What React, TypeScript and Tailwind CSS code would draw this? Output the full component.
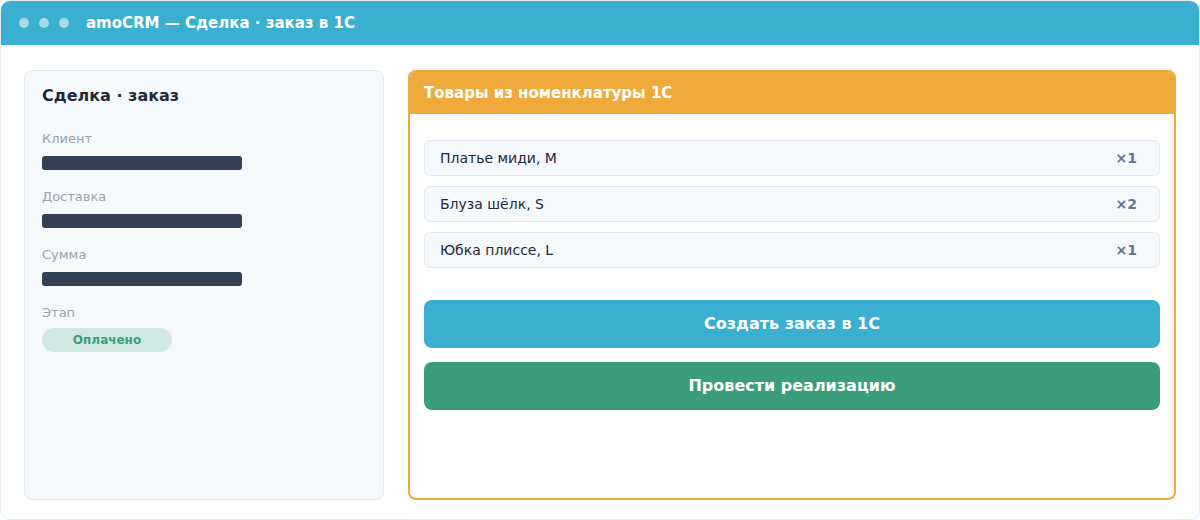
import React from "react";

const fields = ["Клиент", "Доставка", "Сумма"];

const items = [
    { name: "Платье миди, M", qty: "×1" },
    { name: "Блуза шёлк, S", qty: "×2" },
    { name: "Юбка плиссе, L", qty: "×1" },
];

const App: React.FC = () => {
    return (
        <div className="w-[1200px] h-[520px] bg-white font-['DejaVu_Sans',sans-serif]">
            <div className="h-full flex flex-col rounded-[10px] border border-[#e2e8f0] overflow-hidden">
                {/* title bar */}
                <div className="h-[44px] shrink-0 bg-[#3bafcf] flex items-center pl-[18px]">
                    <div className="flex gap-[10px]">
                        <span className="w-[10px] h-[10px] rounded-full bg-white/55" />
                        <span className="w-[10px] h-[10px] rounded-full bg-white/55" />
                        <span className="w-[10px] h-[10px] rounded-full bg-white/55" />
                    </div>
                    <div className="ml-[17px] text-white font-bold text-[15px]">amoCRM — Сделка · заказ в 1С</div>
                </div>

                <div className="flex-1 flex gap-[24px] px-[23px] pt-[25px] pb-[19px]">
                    {/* deal card */}
                    <div className="w-[360px] shrink-0 bg-[#f5f9fc] border border-[#e2e8f0] rounded-[8px] px-[17px] pt-[15px]">
                        <div className="text-[16px] leading-[20px] font-bold text-[#1f2937]">Сделка · заказ</div>
                        <div className="mt-[25px] flex flex-col gap-[19px]">
                            {fields.map((f) => (
                                <div key={f}>
                                    <div className="text-[13px] leading-[16px] text-[#9ca3af]">{f}</div>
                                    <div className="mt-[9px] w-[200px] h-[14px] rounded-[3px] bg-[#334155]" />
                                </div>
                            ))}
                            <div>
                                <div className="text-[13px] leading-[16px] text-[#9ca3af]">Этап</div>
                                <div className="mt-[7px] w-[130px] h-[24px] rounded-full bg-[#d1e7e2] flex items-center justify-center text-[12px] font-bold text-[#3b9d7c]">
                                    Оплачено
                                </div>
                            </div>
                        </div>
                    </div>

                    {/* goods card */}
                    <div className="flex-1 border-2 border-[#f0aa3c] rounded-[8px] overflow-hidden flex flex-col">
                        <div className="h-[42px] shrink-0 bg-[#f0aa3c] flex items-center px-[14px] text-white font-bold text-[15px]">
                            Товары из номенклатуры 1С
                        </div>
                        <div className="px-[14px] pt-[26px]">
                            <div className="flex flex-col gap-[10px]">
                                {items.map((it) => (
                                    <div key={it.name} className="h-[36px] bg-[#f5f9fc] border border-[#e2e8f0] rounded-[6px] flex items-center justify-between pl-[15px] pr-[22px]">
                                        <span className="text-[14px] text-[#1f2937]">{it.name}</span>
                                        <span className="text-[14px] font-bold text-[#64748b]">{it.qty}</span>
                                    </div>
                                ))}
                            </div>
                            <div className="mt-[32px] flex flex-col gap-[14px]">
                                <div className="h-[48px] rounded-[8px] bg-[#3bafcf] flex items-center justify-center text-white font-bold text-[16px]">
                                    Создать заказ в 1С
                                </div>
                                <div className="h-[48px] rounded-[8px] bg-[#3b9d7c] flex items-center justify-center text-white font-bold text-[16px]">
                                    Провести реализацию
                                </div>
                            </div>
                        </div>
                    </div>
                </div>
            </div>
        </div>
    );
};

export default App;
